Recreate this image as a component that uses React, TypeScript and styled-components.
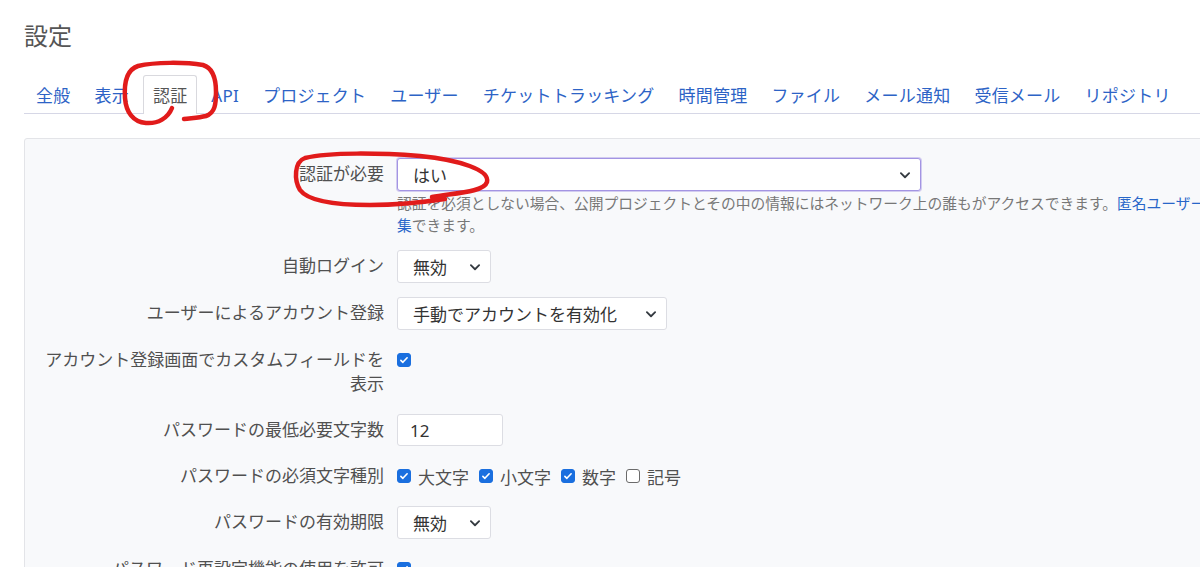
import React from "react";
import styled, { createGlobalStyle } from "styled-components";

const GlobalStyle = createGlobalStyle`
  html, body { margin: 0; padding: 0; background: #fff; overflow: hidden; }
  body {
    width: 1200px; height: 567px;
    font-family: "Noto Sans", "Noto Sans CJK JP", sans-serif;
    color: #505050;
  }
  * { box-sizing: border-box; }
`;

const Page = styled.div`
  position: relative;
  width: 1200px;
  height: 567px;
  overflow: hidden;
  padding: 20px 0 0 24px;
`;

const Title = styled.h2`
  margin: 0;
  font-size: 24px;
  line-height: 32px;
  font-weight: 400;
  color: #555;
`;

const Tabs = styled.ul`
  display: flex;
  list-style: none;
  margin: 23px 0 0;
  padding: 0;
  width: 1300px;
  height: 39px;
  border-bottom: 1px solid #d6d7e6;
`;

const Tab = styled.li<{ $active?: boolean }>`
  position: relative;
  height: ${(p) => (p.$active ? "39px" : "38px")};
  margin: 0 2px;
  padding: 1px 9px 0;
  font-size: 17px;
  line-height: 37px;
  letter-spacing: 0.22px;
  white-space: nowrap;
  color: ${(p) => (p.$active ? "#555" : "#2d63c6")};
  background: ${(p) => (p.$active ? "#fff" : "transparent")};
  border: 1px solid ${(p) => (p.$active ? "#d9d9de" : "transparent")};
  border-bottom: none;
  border-radius: 3px 3px 0 0;
`;

const Panel = styled.div`
  margin-top: 24px;
  width: 1300px;
  height: 600px;
  background: #f8f9fb;
  border: 1px solid #e3e4e8;
  border-radius: 3px;
  padding: 19px 0 20px 14px;
  display: flex;
  flex-direction: column;
  gap: 14px;
`;

const Row = styled.div`
  display: grid;
  grid-template-columns: 345px 1fr;
  column-gap: 13px;
  align-items: start;
`;

const Label = styled.label`
  text-align: right;
  font-size: 17px;
  line-height: 24px;
  padding: 4px 0;
  color: #505050;
`;

const Field = styled.div`
  display: flex;
  flex-direction: column;
  align-items: flex-start;
`;

const SelectBox = styled.div<{ $w: number; $focus?: boolean }>`
  width: ${(p) => p.$w}px;
  height: 33px;
  display: flex;
  align-items: center;
  justify-content: space-between;
  padding: 0 9px 0 15px;
  background: #fff;
  border: 1px solid ${(p) => (p.$focus ? "#a394e3" : "#dcdde3")};
  box-shadow: ${(p) => (p.$focus ? "0 0 0 1px rgba(163,148,227,0.45)" : "none")};
  border-radius: 3px;
  font-size: 17px;
  color: #333;
  white-space: nowrap;
`;

const TextInput = styled.div<{ $w: number }>`
  width: ${(p) => p.$w}px;
  height: 32px;
  display: flex;
  align-items: center;
  padding: 0 12px;
  background: #fff;
  border: 1px solid #dcdde3;
  border-radius: 3px;
  font-size: 17px;
  color: #333;
`;

const Description = styled.p`
  margin: 1px 0 0;
  font-size: 14.75px;
  line-height: 22px;
  color: #777;
  white-space: nowrap;
`;

const Link = styled.a`
  color: #2866c9;
  text-decoration: none;
`;

const CheckGroup = styled.div`
  display: flex;
  align-items: center;
  min-height: 32px;
  align-self: start;
`;

const CheckItem = styled.span`
  display: inline-flex;
  align-items: center;
  gap: 7px;
  margin-right: 10px;
  font-size: 17px;
  color: #505050;
`;

const Box = styled.span<{ $checked: boolean }>`
  display: inline-flex;
  align-items: center;
  justify-content: center;
  width: 14px;
  height: 14px;
  border-radius: 3px;
  background: ${(p) => (p.$checked ? "#1a6fdf" : "#fff")};
  border: 1px solid ${(p) => (p.$checked ? "#1a6fdf" : "#6b6b6b")};
`;

const Overlay = styled.svg`
  position: absolute;
  left: 0;
  top: 0;
  width: 1200px;
  height: 567px;
  pointer-events: none;
`;

const Chevron = () => (
  <svg width="12" height="12" viewBox="0 0 16 16">
    <path d="M2.5 5.5l5.5 5.5 5.5-5.5" fill="none" stroke="#343a40" strokeWidth="2.4" strokeLinecap="round" strokeLinejoin="round" />
  </svg>
);

const Check = ({ checked }: { checked: boolean }) => (
  <Box $checked={checked}>
    {checked && (
      <svg width="10" height="10" viewBox="0 0 16 16">
        <path d="M3 8.5l3.2 3.2L13 4.5" fill="none" stroke="#fff" strokeWidth="2.6" strokeLinecap="round" strokeLinejoin="round" />
      </svg>
    )}
  </Box>
);

const Select = ({ w, value, focus }: { w: number; value: string; focus?: boolean }) => (
  <SelectBox $w={w} $focus={focus}>
    <span>{value}</span>
    <Chevron />
  </SelectBox>
);

const tabs = ["全般", "表示", "認証", "API", "プロジェクト", "ユーザー", "チケットトラッキング", "時間管理", "ファイル", "メール通知", "受信メール", "リポジトリ"];

export default function App() {
  return (
    <>
      <GlobalStyle />
      <Page>
        <Title>設定</Title>
        <Tabs>
          {tabs.map((t) => (
            <Tab key={t} $active={t === "認証"}>{t}</Tab>
          ))}
        </Tabs>
        <Panel>
          <Row>
            <Label>認証が必要</Label>
            <Field>
              <Select w={524} value="はい" focus />
              <Description>
                認証を必須としない場合、公開プロジェクトとその中の情報にはネットワーク上の誰もがアクセスできます。
                <Link href="#">匿名ユーザーが閲覧・編<br />集</Link>
                できます。
              </Description>
            </Field>
          </Row>
          <Row>
            <Label>自動ログイン</Label>
            <Field>
              <Select w={94} value="無効" />
            </Field>
          </Row>
          <Row>
            <Label>ユーザーによるアカウント登録</Label>
            <Field>
              <Select w={270} value="手動でアカウントを有効化" />
            </Field>
          </Row>
          <Row>
            <Label>アカウント登録画面でカスタムフィールドを表示</Label>
            <CheckGroup>
              <Check checked />
            </CheckGroup>
          </Row>
          <Row>
            <Label>パスワードの最低必要文字数</Label>
            <Field>
              <TextInput $w={106}>12</TextInput>
            </Field>
          </Row>
          <Row>
            <Label>パスワードの必須文字種別</Label>
            <CheckGroup>
              <CheckItem><Check checked />大文字</CheckItem>
              <CheckItem><Check checked />小文字</CheckItem>
              <CheckItem><Check checked />数字</CheckItem>
              <CheckItem><Check checked={false} />記号</CheckItem>
            </CheckGroup>
          </Row>
          <Row>
            <Label>パスワードの有効期限</Label>
            <Field>
              <Select w={94} value="無効" />
            </Field>
          </Row>
          <Row>
            <Label>パスワード再設定機能の使用を許可</Label>
            <CheckGroup>
              <Check checked />
            </CheckGroup>
          </Row>
        </Panel>
        <Overlay viewBox="0 0 1200 567">
          <path
            d="M172 108 C168 118, 158 124, 146 123 C133 122, 126 112, 125 98 C124 84, 126 70, 138 66 C155 62, 185 62, 203 65 C213 68, 216 78, 216 92 C216 104, 215 113, 206 116 C198 118, 190 118, 184 119"
            fill="none" stroke="#e11b1b" strokeWidth="4.5" strokeLinecap="round" strokeLinejoin="round"
          />
          <path
            d="M432 197 C455 193, 484 192, 487 182 C490 170, 460 160, 420 156 C380 153, 330 152, 305 158 C294 162, 294 180, 300 190 C308 201, 335 205, 370 205 C400 205, 425 202, 445 199"
            fill="none" stroke="#e11b1b" strokeWidth="4.5" strokeLinecap="round" strokeLinejoin="round"
          />
        </Overlay>
      </Page>
    </>
  );
}
